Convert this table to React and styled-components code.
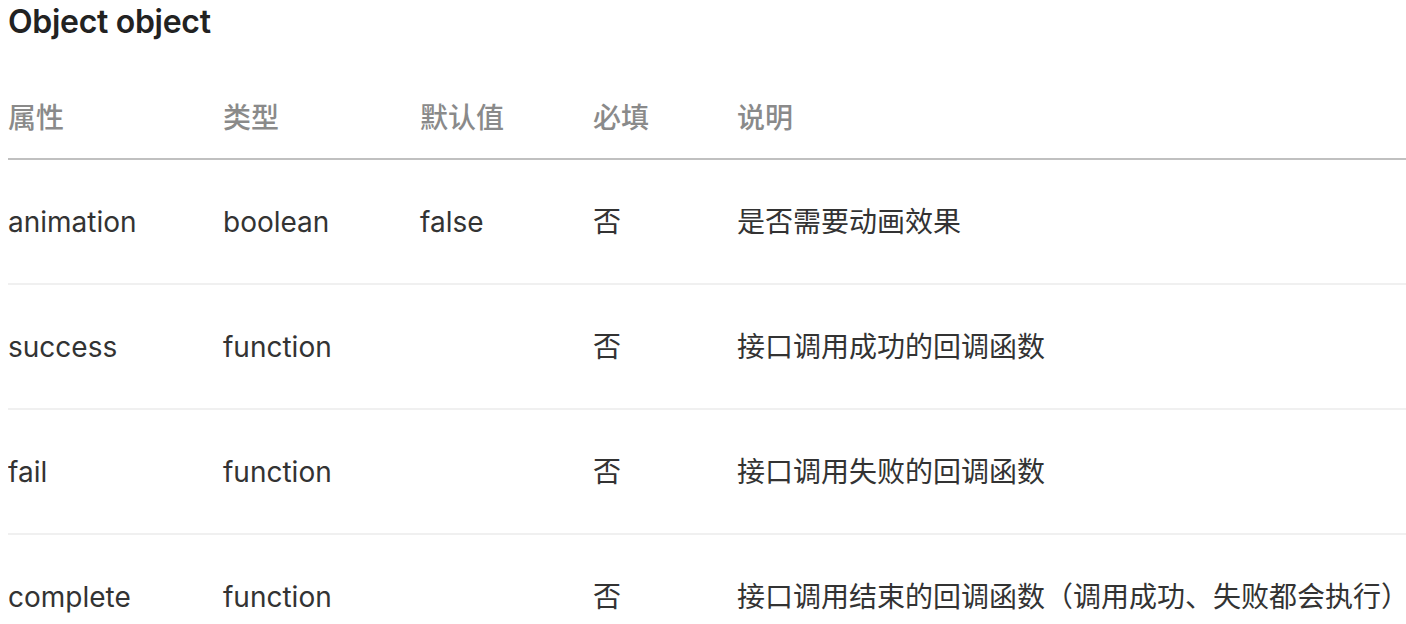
import React from "react";
import styled, { createGlobalStyle } from "styled-components";

const Global = createGlobalStyle`
  html, body { background: #ffffff; }
  body {
    margin: 8px 0 8px 8px;
    font-family: Inter, "Noto Sans CJK SC", sans-serif;
    color: #333333;
  }
`;

const Title = styled.h3`
  margin: 0;
  font-size: 32px;
  line-height: 28px;
  font-weight: 600;
  color: #222222;
  letter-spacing: -0.3px;
`;

const Table = styled.table`
  margin-top: 42px;
  width: 100%;
  border-collapse: collapse;
  table-layout: fixed;
`;

const Col = styled.col`
  width: ${(p) => p.$w};
`;

const HeadCell = styled.th`
  text-align: left;
  padding: 20px 0;
  line-height: 40px;
  font-size: 28px;
  font-weight: 500;
  color: #8a8a8a;
  border-bottom: 2px solid #c0c0c0;
`;

const Row = styled.tr`
  border-bottom: 2px solid #f0f0f0;
`;

const Cell = styled.td`
  padding: 42px 0 41px;
  line-height: 40px;
  font-size: 28px;
  color: #333333;
  white-space: nowrap;
`;

const cols = ["215px", "197px", "173px", "144px", "auto"];
const heads = ["属性", "类型", "默认值", "必填", "说明"];
const rows = [
  ["animation", "boolean", "false", "否", "是否需要动画效果"],
  ["success", "function", "", "否", "接口调用成功的回调函数"],
  ["fail", "function", "", "否", "接口调用失败的回调函数"],
  ["complete", "function", "", "否", "接口调用结束的回调函数（调用成功、失败都会执行）"],
];

export default function App() {
  return (
    <>
      <Global />
      <Title>Object object</Title>
      <Table>
        <colgroup>
          {cols.map((w, i) => (
            <Col key={i} $w={w} />
          ))}
        </colgroup>
        <thead>
          <tr>
            {heads.map((h) => (
              <HeadCell key={h}>{h}</HeadCell>
            ))}
          </tr>
        </thead>
        <tbody>
          {rows.map((r) => (
            <Row key={r[0]}>
              {r.map((c, i) => (
                <Cell key={i}>{c}</Cell>
              ))}
            </Row>
          ))}
        </tbody>
      </Table>
    </>
  );
}
